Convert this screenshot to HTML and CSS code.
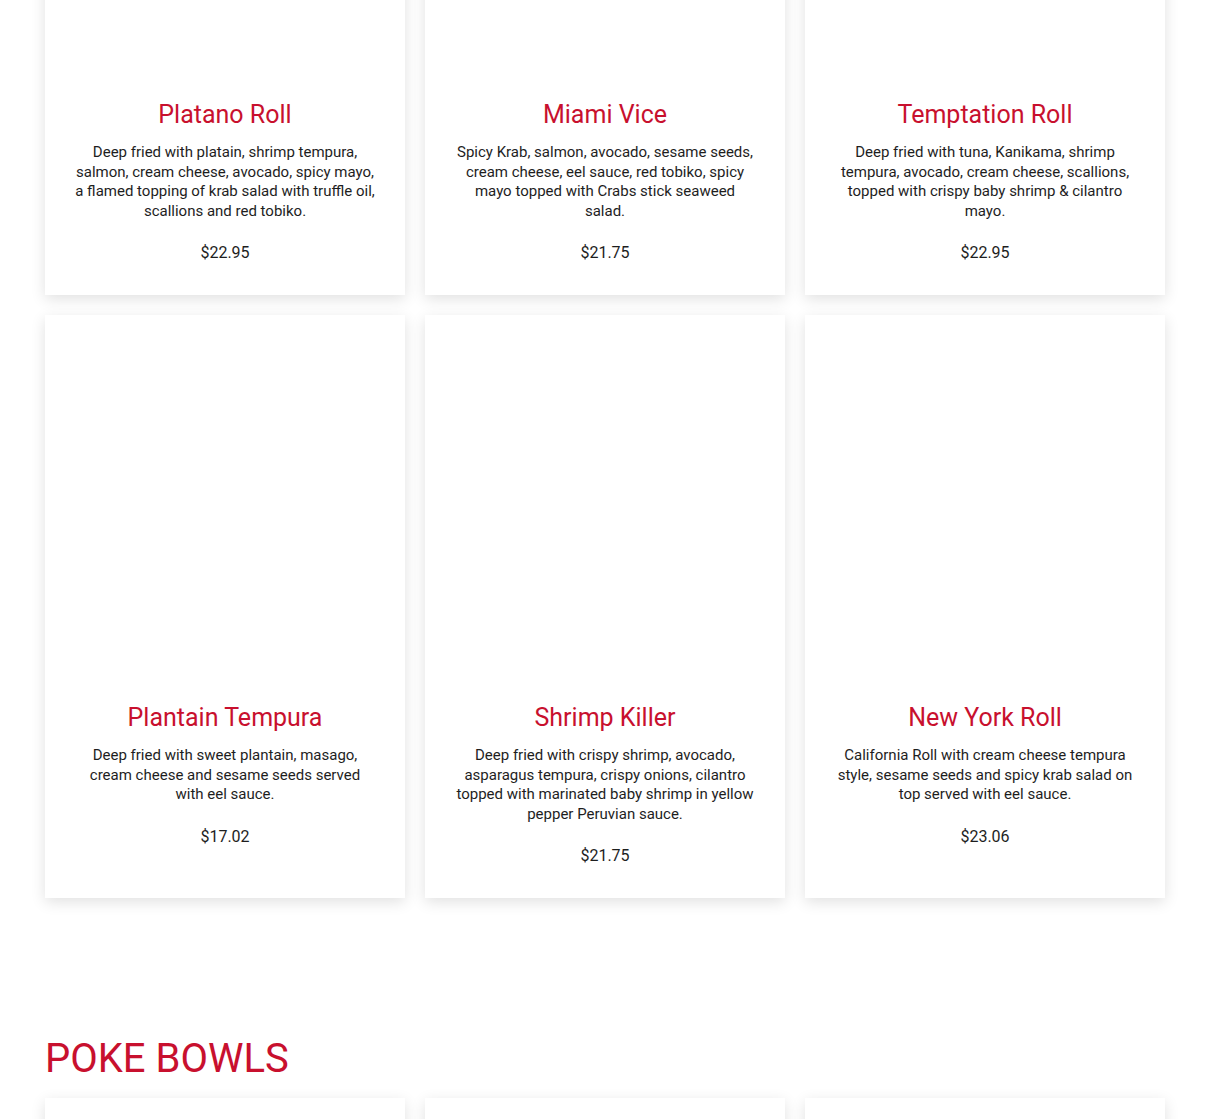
FILE: index.html
```html
<!DOCTYPE html>
<html>
<head>
<meta charset="utf-8">
<link rel="stylesheet" href="styles.css">
</head>
<body>
<main class="page">
  <section class="grid first">
    <article class="card">
      <div class="card-img"></div>
      <div class="card-body">
        <h3 class="card-title">Platano Roll</h3>
        <p class="card-desc">Deep fried with platain, shrimp tempura, salmon, cream cheese, avocado, spicy mayo, a flamed topping of krab salad with truffle oil, scallions and red tobiko.</p>
        <p class="card-price">$22.95</p>
      </div>
    </article>
    <article class="card">
      <div class="card-img"></div>
      <div class="card-body">
        <h3 class="card-title">Miami Vice</h3>
        <p class="card-desc">Spicy Krab, salmon, avocado, sesame seeds, cream cheese, eel sauce, red tobiko, spicy mayo topped with Crabs stick seaweed salad.</p>
        <p class="card-price">$21.75</p>
      </div>
    </article>
    <article class="card">
      <div class="card-img"></div>
      <div class="card-body">
        <h3 class="card-title">Temptation Roll</h3>
        <p class="card-desc">Deep fried with tuna, Kanikama, shrimp tempura, avocado, cream cheese, scallions, topped with crispy baby shrimp &amp; cilantro mayo.</p>
        <p class="card-price">$22.95</p>
      </div>
    </article>
    <article class="card">
      <div class="card-img"></div>
      <div class="card-body">
        <h3 class="card-title">Plantain Tempura</h3>
        <p class="card-desc">Deep fried with sweet plantain, masago, cream cheese and sesame seeds served with eel sauce.</p>
        <p class="card-price">$17.02</p>
      </div>
    </article>
    <article class="card">
      <div class="card-img"></div>
      <div class="card-body">
        <h3 class="card-title">Shrimp Killer</h3>
        <p class="card-desc">Deep fried with crispy shrimp, avocado, asparagus tempura, crispy onions, cilantro topped with marinated baby shrimp in yellow pepper Peruvian sauce.</p>
        <p class="card-price">$21.75</p>
      </div>
    </article>
    <article class="card">
      <div class="card-img"></div>
      <div class="card-body">
        <h3 class="card-title">New York Roll</h3>
        <p class="card-desc">California Roll with cream cheese tempura style, sesame seeds and spicy krab salad on top served with eel sauce.</p>
        <p class="card-price">$23.06</p>
      </div>
    </article>
  </section>

  <h2 class="section-title">POKE BOWLS</h2>

  <section class="grid">
    <article class="card"><div class="card-img"></div></article>
    <article class="card"><div class="card-img"></div></article>
    <article class="card"><div class="card-img"></div></article>
  </section>
</main>
</body>
</html>
```

FILE: styles.css
```css
* { box-sizing: border-box; }
html, body { margin: 0; padding: 0; background: #ffffff; }
body {
  font-family: Roboto, "Liberation Sans", Arial, sans-serif;
  color: #1e1e1e;
  overflow: hidden;
}
.page {
  width: 1120px;
  margin: 0 auto;
}
.grid {
  display: grid;
  grid-template-columns: repeat(3, 360px);
  column-gap: 20px;
  row-gap: 20px;
}
.grid.first {
  margin-top: -288px;
}
.card {
  background: #ffffff;
  box-shadow: 0 4px 14px rgba(0, 0, 0, 0.12);
  display: flex;
  flex-direction: column;
}
.card-img {
  height: 360px;
  background: #ffffff;
}
.card-body {
  padding: 28px 30px 30px;
  text-align: center;
}
.card-title {
  margin: 0;
  font-size: 25px;
  line-height: 29px;
  font-weight: 400;
  color: #c8102e;
}
.card-desc {
  margin: 14px 0 0;
  font-size: 15px;
  line-height: 19.5px;
}
.card-price {
  margin: 20px 0 0;
  font-size: 16px;
  line-height: 24px;
}
.section-title {
  margin: 137px 0 15px;
  font-size: 40px;
  line-height: 48px;
  font-weight: 400;
  color: #c8102e;
}
```
